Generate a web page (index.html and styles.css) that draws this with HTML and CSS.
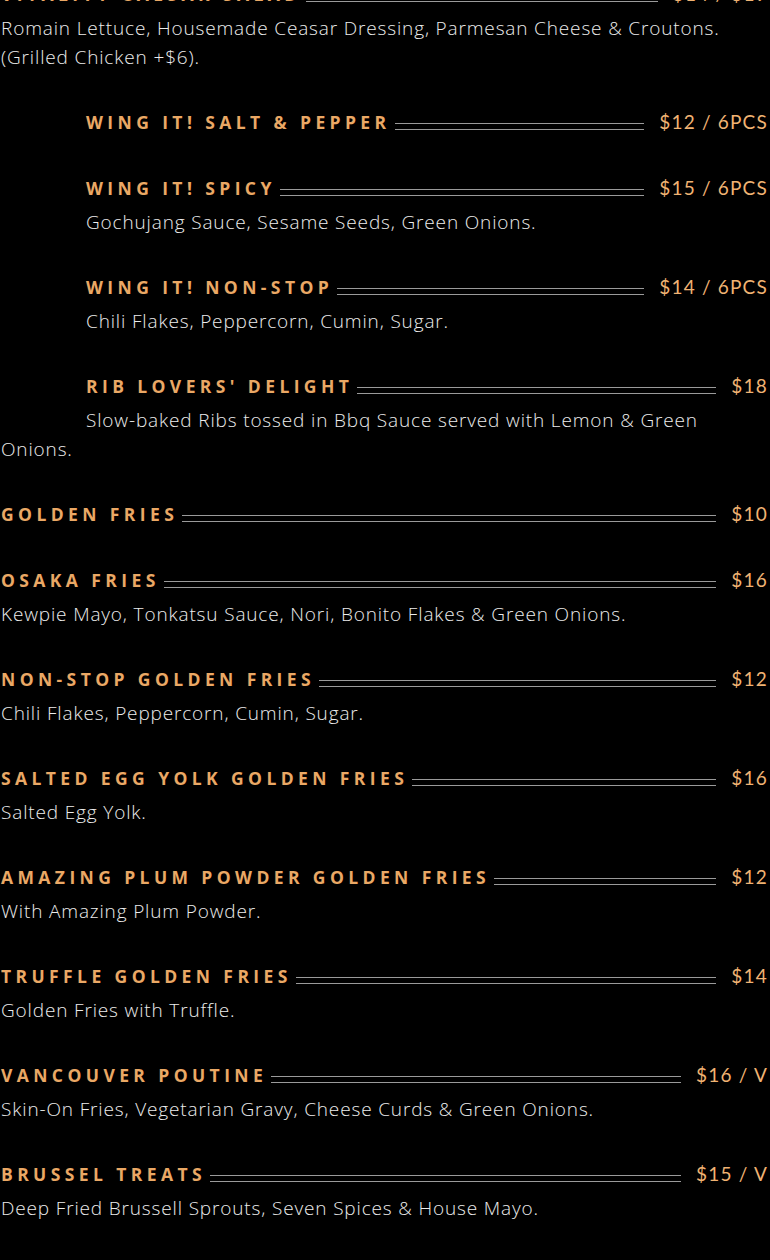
FILE: index.html
```html
<!DOCTYPE html>
<html lang="en">
<head>
<meta charset="utf-8">
<title>Menu</title>
<link rel="stylesheet" href="styles.css">
</head>
<body>
<div class="menu">
  <div class="item">
    <div class="row"><span class="name">Vitality Caesar Salad</span><span class="leader"></span><span class="price">$14 / $19</span></div>
    <p class="desc">Romain Lettuce, Housemade Ceasar Dressing, Parmesan Cheese &amp; Croutons. (Grilled Chicken +$6).</p>
  </div>
  <div class="item item--indent item--plain">
    <div class="row"><span class="name">Wing It! Salt &amp; Pepper</span><span class="leader"></span><span class="price">$12 / 6PCS</span></div>
  </div>
  <div class="item item--indent">
    <div class="row"><span class="name">Wing It! Spicy</span><span class="leader"></span><span class="price">$15 / 6PCS</span></div>
    <p class="desc">Gochujang Sauce, Sesame Seeds, Green Onions.</p>
  </div>
  <div class="item item--indent">
    <div class="row"><span class="name">Wing It! Non-Stop</span><span class="leader"></span><span class="price">$14 / 6PCS</span></div>
    <p class="desc">Chili Flakes, Peppercorn, Cumin, Sugar.</p>
  </div>
  <div class="item item--indent">
    <div class="row"><span class="name">Rib Lovers' Delight</span><span class="leader"></span><span class="price">$18</span></div>
    <p class="desc">Slow-baked Ribs tossed in Bbq Sauce served with Lemon &amp; Green Onions.</p>
  </div>
  <div class="item item--plain">
    <div class="row"><span class="name">Golden Fries</span><span class="leader"></span><span class="price">$10</span></div>
  </div>
  <div class="item">
    <div class="row"><span class="name">Osaka Fries</span><span class="leader"></span><span class="price">$16</span></div>
    <p class="desc">Kewpie Mayo, Tonkatsu Sauce, Nori, Bonito Flakes &amp; Green Onions.</p>
  </div>
  <div class="item">
    <div class="row"><span class="name">Non-Stop Golden Fries</span><span class="leader"></span><span class="price">$12</span></div>
    <p class="desc">Chili Flakes, Peppercorn, Cumin, Sugar.</p>
  </div>
  <div class="item">
    <div class="row"><span class="name">Salted Egg Yolk Golden Fries</span><span class="leader"></span><span class="price">$16</span></div>
    <p class="desc">Salted Egg Yolk.</p>
  </div>
  <div class="item">
    <div class="row"><span class="name">Amazing Plum Powder Golden Fries</span><span class="leader"></span><span class="price">$12</span></div>
    <p class="desc">With Amazing Plum Powder.</p>
  </div>
  <div class="item">
    <div class="row"><span class="name">Truffle Golden Fries</span><span class="leader"></span><span class="price">$14</span></div>
    <p class="desc">Golden Fries with Truffle.</p>
  </div>
  <div class="item">
    <div class="row"><span class="name">Vancouver Poutine</span><span class="leader"></span><span class="price">$16 / V</span></div>
    <p class="desc">Skin-On Fries, Vegetarian Gravy, Cheese Curds &amp; Green Onions.</p>
  </div>
  <div class="item">
    <div class="row"><span class="name">Brussel Treats</span><span class="leader"></span><span class="price">$15 / V</span></div>
    <p class="desc">Deep Fried Brussell Sprouts, Seven Spices &amp; House Mayo.</p>
  </div>
</div>
</body>
</html>
```

FILE: styles.css
```css
html, body {
  margin: 0;
  padding: 0;
  background: #000;
}

body {
  overflow: hidden;
}

.menu {
  margin-top: -26px;
  padding: 0 2px 0 1px;
  display: flex;
  flex-direction: column;
}

.item {
  margin-bottom: 30px;
}

.item--plain {
  margin-bottom: 26px;
}

.row {
  display: flex;
  align-items: flex-start;
  height: 40px;
}

.item--indent .row {
  padding-left: 85px;
}

.name {
  font-family: "Open Sans", sans-serif;
  font-weight: 700;
  font-size: 17.5px;
  line-height: 40px;
  letter-spacing: 4.4px;
  text-transform: uppercase;
  color: #eaa865;
  white-space: nowrap;
}

.leader {
  flex: 1;
  height: 5px;
  margin: 21px 15px 0 4px;
  border-top: 1px solid #9a9a9a;
  border-bottom: 1px solid #9a9a9a;
}

.price {
  font-family: "Lato", sans-serif;
  font-weight: 400;
  font-size: 19px;
  line-height: 39px;
  letter-spacing: 1.2px;
  color: #f0b373;
  white-space: nowrap;
}

.desc {
  margin: 0;
  font-family: "Open Sans", sans-serif;
  font-weight: 300;
  font-size: 19px;
  line-height: 29px;
  letter-spacing: 0.85px;
  color: #ececec;
}

.item--indent .desc {
  text-indent: 85px;
}
```
